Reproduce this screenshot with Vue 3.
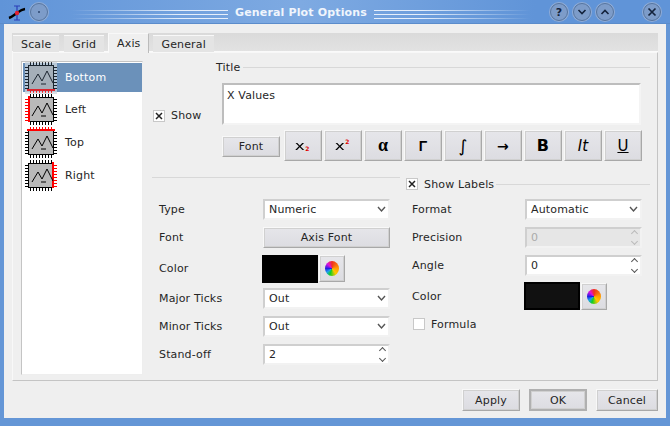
<template>
  <div class="window">
    <div class="titlebar">
      <svg class="logo" width="20" height="18" viewBox="0 0 20 18">
        <path d="M9 3 V17" fill="none" stroke="#2b3fb8" stroke-width="1.2" />
        <path d="M6 3 H12 M6 17 H12" fill="none" stroke="#2b3fb8" stroke-width="1.2" />
        <path d="M1 15 C4 14 6 12 9 10 C11 8.5 13 6.500 17 6" fill="none" stroke="#000" stroke-width="2.4" />
        <circle cx="9" cy="10" r="2.2" fill="#e02030" />
      </svg>
      <span class="wm-btn"><i class="dot"></i></span>
      <div class="stripes stripes-left"></div>
      <div class="title">General Plot Options</div>
      <div class="stripes stripes-right"></div>
      <span class="wm-btn help">?</span>
      <span class="wm-btn next">
        <svg width="10" height="8" viewBox="0 0 10 8"><path d="M1.500 2 L5 5.500 L8.500 2" fill="none" stroke="#14233c" stroke-width="1.600" /></svg>
      </span>
      <span class="wm-btn next">
        <svg width="10" height="8" viewBox="0 0 10 8"><path d="M1.500 6 L5 2.500 L8.500 6" fill="none" stroke="#14233c" stroke-width="1.600" /></svg>
      </span>
      <span class="wm-btn close">
        <svg width="10" height="10" viewBox="0 0 10 10"><path d="M1.500 1.500 L8.500 8.500 M8.500 1.500 L1.500 8.500" fill="none" stroke="#14233c" stroke-width="1.700" /></svg>
      </span>
    </div>

    <div class="dialog">
      <div class="tabbar">
        <div
          v-for="tab in tabs"
          :key="tab"
          class="tab"
          :class="{ active: tab === 'Axis' }"
        >{{ tab }}</div>
      </div>

      <div class="panel">
        <div class="axis-list">
          <div
            v-for="(axis, i) in axes"
            :key="axis.name"
            class="axis-item"
            :class="{ selected: i === 0 }"
          >
            <svg class="axis-icon" width="32" height="32" viewBox="0 0 32 32">
              <path :d="ticks" fill="none" stroke="#000" stroke-width="1" />
              <rect x="3.500" y="3.500" width="25" height="24" fill="#b9b9b9" stroke="#000" />
              <path :d="axis.redTicks" fill="none" stroke="#f00" stroke-width="1" />
              <path :d="axis.red" fill="none" stroke="#f00" stroke-width="2" />
              <path d="M7 22 L13 12 L17 19 L22 9 L28 21 M16 22 H21" fill="none" stroke="#000" stroke-width="1" />
            </svg>
            <span>{{ axis.name }}</span>
          </div>
        </div>

        <div class="content">
          <div class="title-section">
            <label class="check show-check">
              <span class="box"><svg width="8" height="8" viewBox="0 0 8 8"><path d="M1 1 L7 7 M7 1 L1 7" stroke="#222" stroke-width="1.500" /></svg></span>
              <span>Show</span>
            </label>
            <div class="title-group">
              <div class="group-head"><span>Title</span><i></i></div>
              <div class="editor">X Values</div>
              <div class="toolbar">
                <div class="btn font-btn">Font</div>
                <div class="btn sym small-sym"><span class="x-glyph">x</span><span class="script lower">2</span></div>
                <div class="btn sym small-sym"><span class="x-glyph">x</span><span class="script upper">2</span></div>
                <div class="btn sym alpha">α</div>
                <div class="btn sym gamma">Γ</div>
                <div class="btn sym integral">∫</div>
                <div class="btn sym arrow">→</div>
                <div class="btn sym big-bold">B</div>
                <div class="btn sym italic">It</div>
                <div class="btn sym under">U</div>
              </div>
            </div>
          </div>

          <div class="forms">
            <div class="form left">
              <div class="row"><label>Type</label><div class="field select">Numeric<svg class="chev" width="9" height="8" viewBox="0 0 9 8"><path d="M1 2 L4.500 6 L8 2" fill="none" stroke="#555" stroke-width="1.400" /></svg></div></div>
              <div class="row"><label>Font</label><div class="btn axis-font">Axis Font</div></div>
              <div class="row color-row"><label>Color</label><div class="swatch"></div><div class="btn wheel-btn"><i class="wheel"></i></div></div>
              <div class="row"><label>Major Ticks</label><div class="field select">Out<svg class="chev" width="9" height="8" viewBox="0 0 9 8"><path d="M1 2 L4.500 6 L8 2" fill="none" stroke="#555" stroke-width="1.400" /></svg></div></div>
              <div class="row"><label>Minor Ticks</label><div class="field select">Out<svg class="chev" width="9" height="8" viewBox="0 0 9 8"><path d="M1 2 L4.500 6 L8 2" fill="none" stroke="#555" stroke-width="1.400" /></svg></div></div>
              <div class="row"><label>Stand-off</label><div class="field">2<span class="spin"><b class="up-arrow"></b><b class="down-arrow"></b></span></div></div>
            </div>

            <div class="form right">
              <div class="labels-head">
                <label class="check">
                  <span class="box"><svg width="8" height="8" viewBox="0 0 8 8"><path d="M1 1 L7 7 M7 1 L1 7" stroke="#222" stroke-width="1.500" /></svg></span>
                  <span>Show Labels</span>
                </label>
                <i></i>
              </div>
              <div class="row"><label>Format</label><div class="field select">Automatic<svg class="chev" width="9" height="8" viewBox="0 0 9 8"><path d="M1 2 L4.500 6 L8 2" fill="none" stroke="#555" stroke-width="1.400" /></svg></div></div>
              <div class="row"><label>Precision</label><div class="field disabled">0<span class="spin"><b class="up-arrow"></b><b class="down-arrow"></b></span></div></div>
              <div class="row"><label>Angle</label><div class="field">0<span class="spin"><b class="up-arrow"></b><b class="down-arrow"></b></span></div></div>
              <div class="row color-row-r"><label>Color</label><div class="swatch dark"></div><div class="btn wheel-btn"><i class="wheel"></i></div></div>
              <div class="row formula-row">
                <label class="check"><span class="box"></span><span>Formula</span></label>
              </div>
            </div>
          </div>
        </div>
      </div>

      <div class="actions">
        <div class="btn action">Apply</div>
        <div class="btn action default">OK</div>
        <div class="btn action cancel">Cancel</div>
      </div>
    </div>
  </div>
</template>

<script setup>
const tabs = ["Scale", "Grid", "Axis", "General"];

// tick marks round the little plot icon
const tickPath = (side) => {
  let d = "";
  for (let p = 5.5; p < 28; p += 3) {
    if (side === "bottom" || side === "all") d += `M${p} 28 V31 `;
    if (side === "top" || side === "all") d += `M${p} 0 V3 `;
    if (side === "left" || side === "all") d += `M0 ${p} H3 `;
    if (side === "right" || side === "all") d += `M29 ${p} H32 `;
  }
  return d;
};

const ticks = tickPath("all");

const axes = [
  { name: "Bottom", red: "M2 28 H30", redTicks: tickPath("bottom") },
  { name: "Left", red: "M4 2 V28", redTicks: tickPath("left") },
  { name: "Top", red: "M2 3 H30", redTicks: tickPath("top") },
  { name: "Right", red: "M28 2 V28", redTicks: tickPath("right") },
];
</script>

<style>
body {
  margin: 0;
}
</style>

<style scoped>
.window {
  width: 670px;
  height: 426px;
  background: #6496d6;
  display: flex;
  flex-direction: column;
  font-family: "DejaVu Sans", sans-serif;
  font-size: 11px;
  letter-spacing: 0.15px;
  color: #262626;
  overflow: hidden;
}
.titlebar {
  height: 24px;
  display: flex;
  align-items: center;
  padding: 1px 9px 0 8px;
  background: linear-gradient(90deg, #6094d8, #7eaae2 45%, #6094d8 80%);
  border-bottom: 1px solid #5b8ccb;
  box-sizing: border-box;
}
.logo {
  margin-right: 2px;
}
.wm-btn {
  width: 16px;
  height: 16px;
  border-radius: 50%;
  background: #7d9cc9;
  border: 1px solid #56759f;
  box-shadow: 0 0 0 1px #90acd6;
  display: flex;
  align-items: center;
  justify-content: center;
  color: #14233c;
  font-size: 11px;
  font-weight: bold;
  flex: none;
}
.dot {
  width: 2px;
  height: 2px;
  background: #2d466e;
  border-radius: 50%;
}
.wm-btn.help {
  margin-left: 19px;
}
.wm-btn.next {
  margin-left: 5px;
}
.wm-btn.close {
  margin-left: 29px;
}
.stripes {
  flex: 1;
  height: 9px;
  align-self: flex-start;
  margin-top: 9px;
  background: repeating-linear-gradient(#e6effb 0 1px, transparent 1px 4px);
}
.stripes-left {
  -webkit-mask-image: linear-gradient(90deg, transparent, #000 70%);
  mask-image: linear-gradient(90deg, transparent, #000 70%);
  margin-left: 23px;
}
.stripes-right {
  -webkit-mask-image: linear-gradient(270deg, transparent, #000 70%);
  mask-image: linear-gradient(270deg, transparent, #000 70%);
}
.title {
  color: #f0f5fc;
  font-weight: bold;
  letter-spacing: 0.15px;
  padding: 1px 7px 0;
  white-space: nowrap;
}
.dialog {
  flex: 1;
  margin: 0 4px 8px;
  background: #efefef;
  padding: 9px 8px 7px;
  display: flex;
  flex-direction: column;
}
.tabbar {
  height: 19px;
  display: flex;
  align-items: flex-end;
  background: linear-gradient(#dadada, #e2e2e2);
  border-bottom: 1px solid #fafafa;
  box-sizing: border-box;
}
.tab {
  height: 17px;
  line-height: 18px;
  padding: 0 8px;
  background: #e4e4e4;
  border-top: 1px solid #f8f8f8;
  box-sizing: border-box;
  margin: 0 4px -1px 1px;
  text-align: center;
}
.tab.active {
  height: 20px;
  line-height: 19px;
  background: #efefef;
  margin: 0 3px -2px 0;
  border-left: 1px solid #fafafa;
  border-right: 1px solid #bbb;
  position: relative;
}
.panel {
  flex: 1;
  display: flex;
  border: 1px solid #c4c4c4;
  border-top-color: #f8f8f8;
  border-left-color: #f8f8f8;
  padding: 8px 7px 5px 8px;
  gap: 9px;
  min-height: 0;
}
.axis-list {
  width: 122px;
  box-sizing: border-box;
  background: #fff;
  border: 1px solid #c4c4c4;
  border-right-color: #eee;
  border-bottom-color: #eee;
  padding: 1px 0 1px 1px;
}
.axis-item {
  height: 33px;
  display: flex;
  align-items: center;
  gap: 8px;
  padding-left: 2px;
}
.axis-item.selected {
  background: #6b91ba;
  color: #fff;
  height: 29px;
  margin-bottom: 1px;
}
.axis-item.selected .axis-icon {
  background: #d0d8e0;
  opacity: 0.75;
}
.content {
  flex: 1;
  display: flex;
  flex-direction: column;
}
.title-section {
  display: flex;
  height: 116px;
}
.check {
  display: flex;
  align-items: center;
  gap: 6px;
}
.box {
  width: 12px;
  height: 12px;
  box-sizing: border-box;
  background: #fff;
  border: 1px solid #c8c8c8;
  display: flex;
  align-items: center;
  justify-content: center;
}
.show-check {
  width: 64px;
  align-self: flex-start;
  margin-top: 48px;
  margin-left: 1px;
}
.title-group {
  flex: 1;
  margin-left: -1px;
}
.group-head {
  height: 12px;
  display: flex;
  align-items: center;
  gap: 3px;
}
.group-head i,
.labels-head i {
  flex: 1;
  height: 1px;
  background: #d8d8d8;
}
.editor {
  height: 42px;
  box-sizing: border-box;
  margin: 10px 9px 0 6px;
  background: #fff;
  border: 2px solid #bdbdbd;
  border-right-color: #f4f4f4;
  border-bottom-color: #f4f4f4;
  padding: 4px 3px;
}
.toolbar {
  display: flex;
  align-items: center;
  gap: 2px;
  margin: 5px 0 0 6px;
}
.btn {
  box-sizing: border-box;
  display: flex;
  align-items: center;
  justify-content: center;
  background: linear-gradient(#e6e6ea, #dcdce1);
  border: 1px solid #f8f8f8;
  border-right-color: #a8a8a8;
  border-bottom-color: #a8a8a8;
  box-shadow: 0 0 0 1px #d0d0d0 inset;
}
.font-btn {
  width: 58px;
  height: 21px;
  margin: 2px 2px 0 0;
}
.sym {
  width: 38px;
  height: 31px;
  color: #000;
  font-size: 15px;
}
.x-glyph {
  font-size: 13px;
  line-height: 10px;
  transform: scaleX(1.3);
  margin-right: 1px;
}
.script {
  font-size: 6px;
  color: #e00000;
  font-weight: bold;
  line-height: 6px;
  letter-spacing: 0;
}
.script.lower {
  margin-top: 7px;
}
.script.upper {
  margin-top: -7px;
}
.alpha {
  font-weight: bold;
  font-family: "Liberation Serif", serif;
  font-size: 18px;
}
.gamma {
  font-weight: bold;
  font-family: "Liberation Sans", sans-serif;
  font-size: 14px;
}
.arrow {
  font-weight: bold;
  font-size: 14px;
}
.integral {
  font-size: 17px;
}
.big-bold {
  font-weight: bold;
  font-size: 16px;
}
.italic {
  font-style: italic;
  font-size: 15px;
}
.under {
  text-decoration: underline;
  font-size: 15px;
}
.forms {
  display: flex;
}
.form {
  display: flex;
  flex-direction: column;
}
.form.left {
  width: 254px;
  box-sizing: border-box;
  padding: 18px 10px 0 7px;
  background: linear-gradient(#d8d8d8, #d8d8d8) no-repeat 0 0 / 248px 1px;
}
.form.right {
  flex: 1;
  padding-top: 1px;
}
.labels-head {
  display: flex;
  align-items: center;
  height: 12px;
  gap: 2px;
  margin-bottom: 5px;
}
.row {
  height: 28px;
  display: flex;
  align-items: center;
}
.form.left .row > label {
  width: 104px;
}
.form.right .row > label {
  width: 113px;
  margin-left: 6px;
}
.form.right .formula-row > label {
  width: auto;
  margin-left: 7px;
}
.color-row {
  height: 33px;
  padding-top: 2px;
  box-sizing: border-box;
}
.color-row-r {
  height: 34px;
}
.formula-row {
  height: 22px;
}
.field {
  width: 127px;
  height: 21px;
  box-sizing: border-box;
  background: #fff;
  border: 2px solid #cfcfcf;
  border-right-color: #f2f2f2;
  border-bottom-color: #f2f2f2;
  display: flex;
  align-items: center;
  padding-left: 4px;
}
.form.right .field {
  width: 117px;
}
.field.disabled {
  background: #e6e6e6;
  color: #aaa;
}
.chev {
  margin-left: auto;
  margin-right: 2px;
}
.spin {
  margin-left: auto;
  margin-right: 3px;
  display: flex;
  flex-direction: column;
  gap: 3px;
}
.spin b {
  display: block;
  width: 5px;
  height: 5px;
  box-sizing: border-box;
  border-left: 1px solid #555;
  border-top: 1px solid #555;
  transform: rotate(45deg);
}
.spin .down-arrow {
  transform: rotate(225deg);
}
.disabled .spin b {
  border-color: #bbb;
}
.axis-font {
  width: 127px;
  height: 21px;
}
.swatch {
  width: 56px;
  height: 28px;
  background: #000;
  margin-left: -1px;
}
.swatch.dark {
  background: #111;
  border: 2px solid #000;
  box-sizing: border-box;
}
.wheel-btn {
  width: 26px;
  height: 27px;
  margin-left: 1px;
}
.wheel {
  width: 14px;
  height: 15px;
  border-radius: 50%;
  background: conic-gradient(#f03020, #ffa000 25%, #ffc800 40%, #10d020 55%, #20a0f0 65%, #2020e0 75%, #e010e0 88%, #f03020);
}
.actions {
  display: flex;
  justify-content: flex-end;
  gap: 9px;
  margin-top: 8px;
}
.action {
  height: 22px;
  width: 58px;
}
.action.default {
  border: 2px solid #b0b0b0;
}
.action.cancel {
  width: 62px;
}
</style>
